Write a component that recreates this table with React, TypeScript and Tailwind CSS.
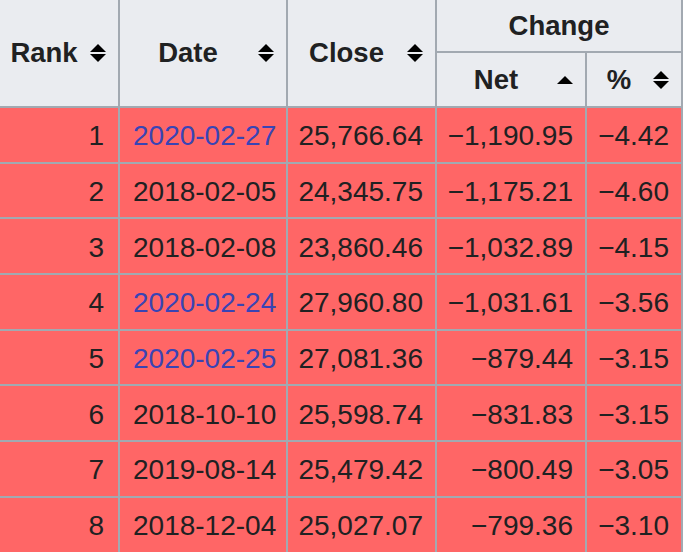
import React from "react";

const rows: [string, string, boolean, string, string, string][] = [
  ["1", "2020-02-27", true, "25,766.64", "\u22121,190.95", "\u22124.42"],
  ["2", "2018-02-05", false, "24,345.75", "\u22121,175.21", "\u22124.60"],
  ["3", "2018-02-08", false, "23,860.46", "\u22121,032.89", "\u22124.15"],
  ["4", "2020-02-24", true, "27,960.80", "\u22121,031.61", "\u22123.56"],
  ["5", "2020-02-25", true, "27,081.36", "\u2212879.44", "\u22123.15"],
  ["6", "2018-10-10", false, "25,598.74", "\u2212831.83", "\u22123.15"],
  ["7", "2019-08-14", false, "25,479.42", "\u2212800.49", "\u22123.05"],
  ["8", "2018-12-04", false, "25,027.07", "\u2212799.36", "\u22123.10"],
];

function SortBoth() {
  return (
    <svg width="16" height="18" viewBox="0 0 16 18" className="shrink-0 mr-[12px]">
      <polygon points="0,8 8,0 16,8" fill="#000" />
      <polygon points="0,10 16,10 8,18" fill="#000" />
    </svg>
  );
}

function SortUp() {
  return (
    <svg width="16" height="8" viewBox="0 0 16 8" className="shrink-0 mr-[12px]">
      <polygon points="0,8 8,0 16,8" fill="#000" />
    </svg>
  );
}

function Head({ label, icon, className = "" }: { label: string; icon: React.ReactNode; className?: string }) {
  return (
    <div className={"bg-[#eaecf0] flex items-center " + className}>
      <span className="flex-1 text-center font-bold pr-[2px]">{label}</span>
      {icon}
    </div>
  );
}

export default function App() {
  return (
    <div className="w-[684px] h-[553px] overflow-hidden bg-white text-[#202122]" style={{ fontFamily: '"Liberation Sans", Arial, sans-serif' }}>
      <div className="w-[683px] bg-[#a2a9b1] pr-[2px]">
        <div className="grid gap-[2px] grid-cols-[118px_166px_147px_148px_94px] grid-rows-[51px_53px_repeat(8,53.7px)] text-[27.5px]">
          <Head label="Rank" icon={<SortBoth />} className="row-span-2" />
          <Head label="Date" icon={<SortBoth />} className="row-span-2" />
          <Head label="Close" icon={<SortBoth />} className="row-span-2" />
          <div className="col-span-2 bg-[#eaecf0] flex items-center justify-center font-bold">Change</div>
          <Head label="Net" icon={<SortUp />} />
          <Head label="%" icon={<SortBoth />} />
          {rows.map(([rank, date, link, close, net, pct]) => (
            <React.Fragment key={rank}>
              <div className="bg-[#ff6666] flex items-center justify-end pr-[14px] pt-[3px] text-[28px]">{rank}</div>
              <div className={"bg-[#ff6666] flex items-center pl-[13px] pt-[3px] text-[28px] " + (link ? "text-[#3944b4]" : "")}>{date}</div>
              <div className="bg-[#ff6666] flex items-center justify-end pr-[12px] pt-[3px] text-[28px]">{close}</div>
              <div className="bg-[#ff6666] flex items-center justify-end pr-[12px] pt-[3px] text-[28px]">{net}</div>
              <div className="bg-[#ff6666] flex items-center justify-end pr-[12px] pt-[3px] text-[28px]">{pct}</div>
            </React.Fragment>
          ))}
        </div>
      </div>
    </div>
  );
}
